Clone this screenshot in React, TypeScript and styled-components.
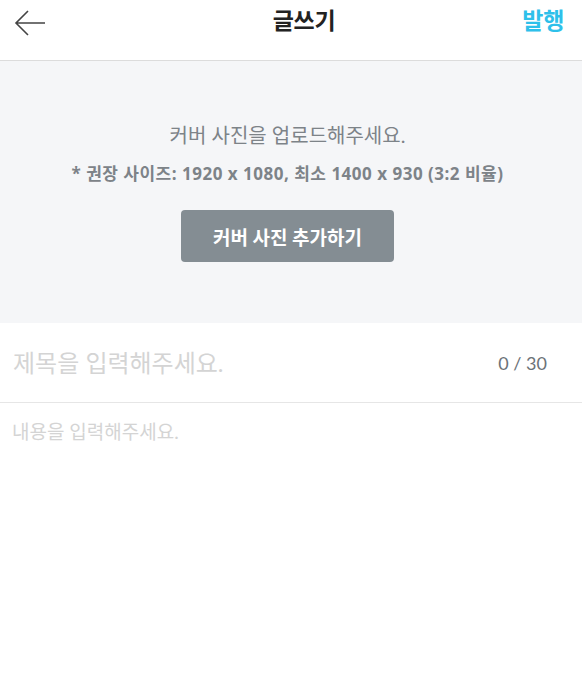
import React from "react";
import styled, { createGlobalStyle } from "styled-components";

const Global = createGlobalStyle`
  html, body { margin: 0; padding: 0; background: #fff; }
  body { font-family: Lato, "Noto Sans CJK KR", sans-serif; }
  * { box-sizing: border-box; }
`;

const Page = styled.div`
  width: 582px;
  min-height: 688px;
  display: flex;
  flex-direction: column;
  background: #fff;
`;

const Header = styled.header`
  height: 61px;
  display: grid;
  grid-template-columns: 1fr auto 1fr;
  align-items: start;
  padding: 0 18px 0 14px;
  border-bottom: 1px solid #dcdcdc;
`;

const BackButton = styled.button`
  justify-self: start;
  background: none;
  border: 0;
  padding: 0;
  margin-top: 10px;
  width: 32px;
  height: 26px;
  cursor: pointer;
  display: flex;
`;

const Title = styled.h1`
  margin: 2px 0 0 30px;
  font-size: 23px;
  font-weight: 700;
  color: #222;
  letter-spacing: -0.3px;
`;

const Publish = styled.button`
  justify-self: end;
  background: none;
  border: 0;
  padding: 0;
  margin-top: 2px;
  font-family: inherit;
  font-size: 23px;
  font-weight: 700;
  color: #2ec0ea;
  letter-spacing: -0.3px;
`;

const Cover = styled.section`
  height: 262px;
  background: #f5f6f8;
  display: flex;
  flex-direction: column;
  align-items: center;
  padding: 59px 7px 0 0;
`;

const CoverText = styled.p`
  margin: 0;
  font-size: 20px;
  color: #7d8388;
  line-height: 30px;
`;

const CoverHint = styled.p`
  margin: 11px 0 0;
  font-family: "Open Sans", "Noto Sans CJK KR", sans-serif;
  font-size: 17px;
  font-weight: 700;
  color: #7d8388;
  line-height: 26px;
  letter-spacing: 0.5px;
`;

const CoverButton = styled.button`
  margin-top: 23px;
  width: 213px;
  height: 52px;
  border: 0;
  border-radius: 4px;
  background: #848d93;
  color: #fff;
  font-family: inherit;
  font-size: 19px;
  font-weight: 700;
`;

const TitleRow = styled.div`
  height: 80px;
  display: flex;
  align-items: center;
  justify-content: space-between;
  padding: 0 35px 0 13px;
  border-bottom: 1px solid #e6e6e6;
`;

const TitleInput = styled.input`
  border: 0;
  outline: none;
  flex: 1;
  font-family: inherit;
  font-size: 24px;
  color: #333;
  padding: 0;
  background: transparent;
  &::placeholder { color: #d4d4d4; }
`;

const Counter = styled.span`
  font-size: 18px;
  color: #6c7278;
`;

const Body = styled.textarea`
  border: 0;
  outline: none;
  resize: none;
  flex: 1;
  padding: 15px 12px;
  font-family: inherit;
  font-size: 19px;
  line-height: 28px;
  color: #333;
  &::placeholder { color: #d4d4d4; }
`;

export default function App() {
  return (
    <Page>
      <Global />
      <Header>
        <BackButton aria-label="뒤로">
          <svg width="32" height="26" viewBox="0 0 32 26" fill="none">
            <path d="M14 1 L2 13 L14 25 M2 13 H31" stroke="#444" strokeWidth="1.6" />
          </svg>
        </BackButton>
        <Title>글쓰기</Title>
        <Publish>발행</Publish>
      </Header>
      <Cover>
        <CoverText>커버 사진을 업로드해주세요.</CoverText>
        <CoverHint>* 권장 사이즈: 1920 x 1080, 최소 1400 x 930 (3:2 비율)</CoverHint>
        <CoverButton>커버 사진 추가하기</CoverButton>
      </Cover>
      <TitleRow>
        <TitleInput placeholder="제목을 입력해주세요." />
        <Counter>0 / 30</Counter>
      </TitleRow>
      <Body placeholder="내용을 입력해주세요." />
    </Page>
  );
}
